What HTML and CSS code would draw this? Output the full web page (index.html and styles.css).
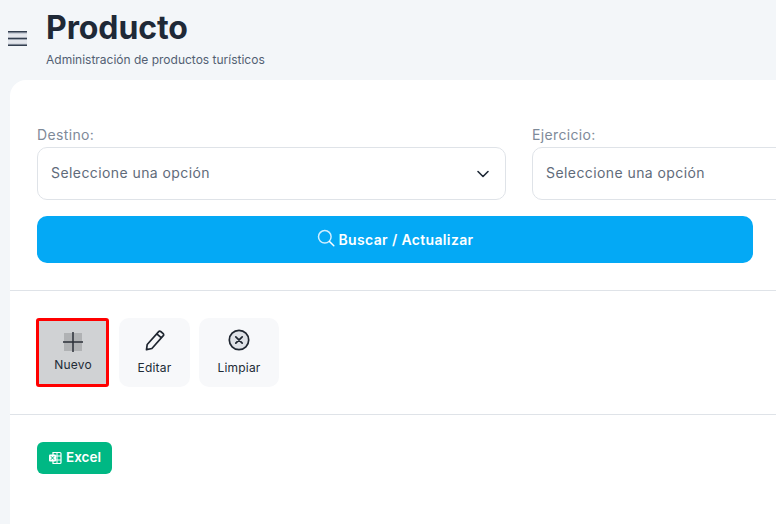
FILE: index.html
```html
<!DOCTYPE html>
<html lang="es">
<head>
<meta charset="utf-8">
<title>Producto</title>
<link rel="stylesheet" href="styles.css">
</head>
<body>
<div class="page">
  <header class="header">
    <button class="burger" aria-label="Menú">
      <svg width="19" height="16" viewBox="0 0 19 16"><rect y="0" width="19" height="15" fill="#c6ccd6"/><rect y="3" width="19" height="3.5" fill="#e3e6ec"/><rect y="9" width="19" height="3.500" fill="#e3e6ec"/><path d="M0 .8h19M0 7.500h19M0 14.200h19" stroke="#333f50" stroke-width="1.500" fill="none"/></svg>
    </button>
    <div class="heading">
      <h1 class="title">Producto</h1>
      <p class="subtitle">Administración de productos turísticos</p>
    </div>
  </header>
  <main class="card">
    <section class="filters">
      <div class="fields">
        <div class="field">
          <label class="label">Destino:</label>
          <div class="select">
            <span>Seleccione una opción</span>
            <svg width="14" height="14" viewBox="0 0 14 14"><path d="M2 4.500l5 5 5-5" stroke="#1f2937" stroke-width="1.600" fill="none" stroke-linecap="round" stroke-linejoin="round"/></svg>
          </div>
        </div>
        <div class="field">
          <label class="label">Ejercicio:</label>
          <div class="select">
            <span>Seleccione una opción</span>
            <svg width="14" height="14" viewBox="0 0 14 14"><path d="M2 4.500l5 5 5-5" stroke="#1f2937" stroke-width="1.600" fill="none" stroke-linecap="round" stroke-linejoin="round"/></svg>
          </div>
        </div>
      </div>
      <button class="search">
        <svg class="search-icon" width="18" height="18" viewBox="0 0 18 18"><circle cx="7.800" cy="7.800" r="6.300" stroke="#cfeeff" stroke-width="1.500" fill="none"/><path d="M12.500 12.500l4.300 4.300" stroke="#fff" stroke-width="1.500" stroke-linecap="round"/></svg>
        <span>Buscar / Actualizar</span>
      </button>
    </section>
    <section class="tools">
      <button class="tool tool-active">
        <svg width="20" height="20" viewBox="0 0 20 20"><rect x="1" y="1" width="18" height="18" fill="#b0b2b4"/><path d="M10 0v20M0 10h20" stroke="#2b3038" stroke-width="1.500"/></svg>
        <span>Nuevo</span>
      </button>
      <button class="tool">
        <svg width="22" height="22" viewBox="0 0 22 22"><path d="M3.200 15.500L14.700 2.600a1.400 1.400 0 0 1 2-.1l2.500 2.200a1.400 1.400 0 0 1 .1 2L7.900 19.500l-5.400 1.200zM12.800 4.800l4.600 4.100" stroke="#1f2630" stroke-width="1.700" fill="none" stroke-linejoin="round"/></svg>
        <span>Editar</span>
      </button>
      <button class="tool tool-wide">
        <svg width="22" height="22" viewBox="0 0 22 22"><circle cx="11" cy="11" r="9.700" fill="#dfe2e7" stroke="#1f2630" stroke-width="1.700"/><path d="M7.800 7.800l6.400 6.400M14.200 7.800l-6.400 6.400" stroke="#1f2630" stroke-width="1.700" stroke-linecap="round"/></svg>
        <span>Limpiar</span>
      </button>
    </section>
    <section class="export">
      <button class="excel">
        <svg width="14" height="14" viewBox="0 0 14 14"><path d="M5 1.500h7a1 1 0 0 1 1 1v9a1 1 0 0 1-1 1H5z" fill="none" stroke="#fff" stroke-width="1.200"/><path d="M5 5h8M5 9h8M9 1.500v11" stroke="#fff" stroke-width="1"/><rect x="1" y="3.500" width="7" height="7" rx="1" fill="#fff"/><path d="M3 5.300l3 3.400M6 5.300L3 8.700" stroke="#00b884" stroke-width="1"/></svg>
        <span>Excel</span>
      </button>
    </section>
  </main>
</div>
</body>
</html>
```
FILE: styles.css
```css
* { box-sizing: border-box; }
html, body { margin: 0; height: 100%; overflow: hidden; }
body {
  background: #f3f6f9;
  font-family: Inter, "Noto Sans", "Liberation Sans", sans-serif;
  color: #212b36;
}
.page { width: 100%; height: 524px; padding-left: 10px; display: flex; flex-direction: column; }
button { font-family: inherit; border: 0; cursor: pointer; }

.header { height: 80px; display: flex; align-items: flex-start; margin-left: -10px; padding: 6px 0 0 8px; gap: 19px; }
.burger { background: none; padding: 0; margin-top: 25px; width: 19px; height: 16px; overflow: hidden; display: block; line-height: 0; }
.title { margin: 0; font-size: 32px; line-height: 44px; font-weight: 700; color: #1f2937; letter-spacing: -0.1px; }
.subtitle { margin: 1px 0 0; font-size: 12px; line-height: 18px; color: #525f73; }

.card { flex: 1; min-width: 0; overflow: hidden; background: #fff; border-radius: 16px 0 0 0; display: flex; flex-direction: column; }

.filters { padding: 43px 0 27px 27px; border-bottom: 1px solid #dfe3e8; }
.fields { display: grid; grid-template-columns: 469px 469px; column-gap: 26px; }
.field { display: flex; flex-direction: column; }
.label { font-size: 14px; line-height: 24px; color: #7e8a99; letter-spacing: 0.35px; }
.select {
  height: 53px; border: 1px solid #dfe3e8; border-radius: 10px; padding: 0 15px 0 13px;
  display: flex; align-items: center; justify-content: space-between;
  font-size: 14px; line-height: 20px; color: #5f6b7a; letter-spacing: 0.42px;
}
.select span { margin-top: -2px; }
.search {
  margin-top: 16px; width: 716px; height: 47px; background: #04a9f5; border-radius: 10px;
  color: #fff; font-size: 14px; font-weight: 600; letter-spacing: 0.35px;
  display: flex; align-items: center; justify-content: center; gap: 4px;
}
.search-icon { margin-top: -4px; }

.tools { padding: 27px 0 27px 27px; display: flex; gap: 10px; border-bottom: 1px solid #dfe3e8; }
.tool {
  height: 69px; width: 71px; padding: 11px 0 0; border-radius: 10px; background: #f7f8fa;
  display: flex; flex-direction: column; align-items: center; gap: 8px;
  font-size: 12px; line-height: 18px; font-weight: 400; color: #212b36; letter-spacing: 0.2px;
}
.tool-wide { width: 80px; margin-left: -1px; }
.tool-active { width: 73px; margin-left: -1px; gap: 4px; background: #d0d2d4; border: 3px solid #f00; border-radius: 3px; padding: 11px 0 0 1px; }

.export { padding: 27px 0 0 27px; }
.excel {
  width: 75px; height: 32px; border-radius: 6px; background: #00b884; color: #fff;
  font-size: 13.5px; line-height: 18px; font-weight: 600;
  display: flex; align-items: center; justify-content: center; gap: 4px;
}
.excel span { margin-top: -2px; }
```
